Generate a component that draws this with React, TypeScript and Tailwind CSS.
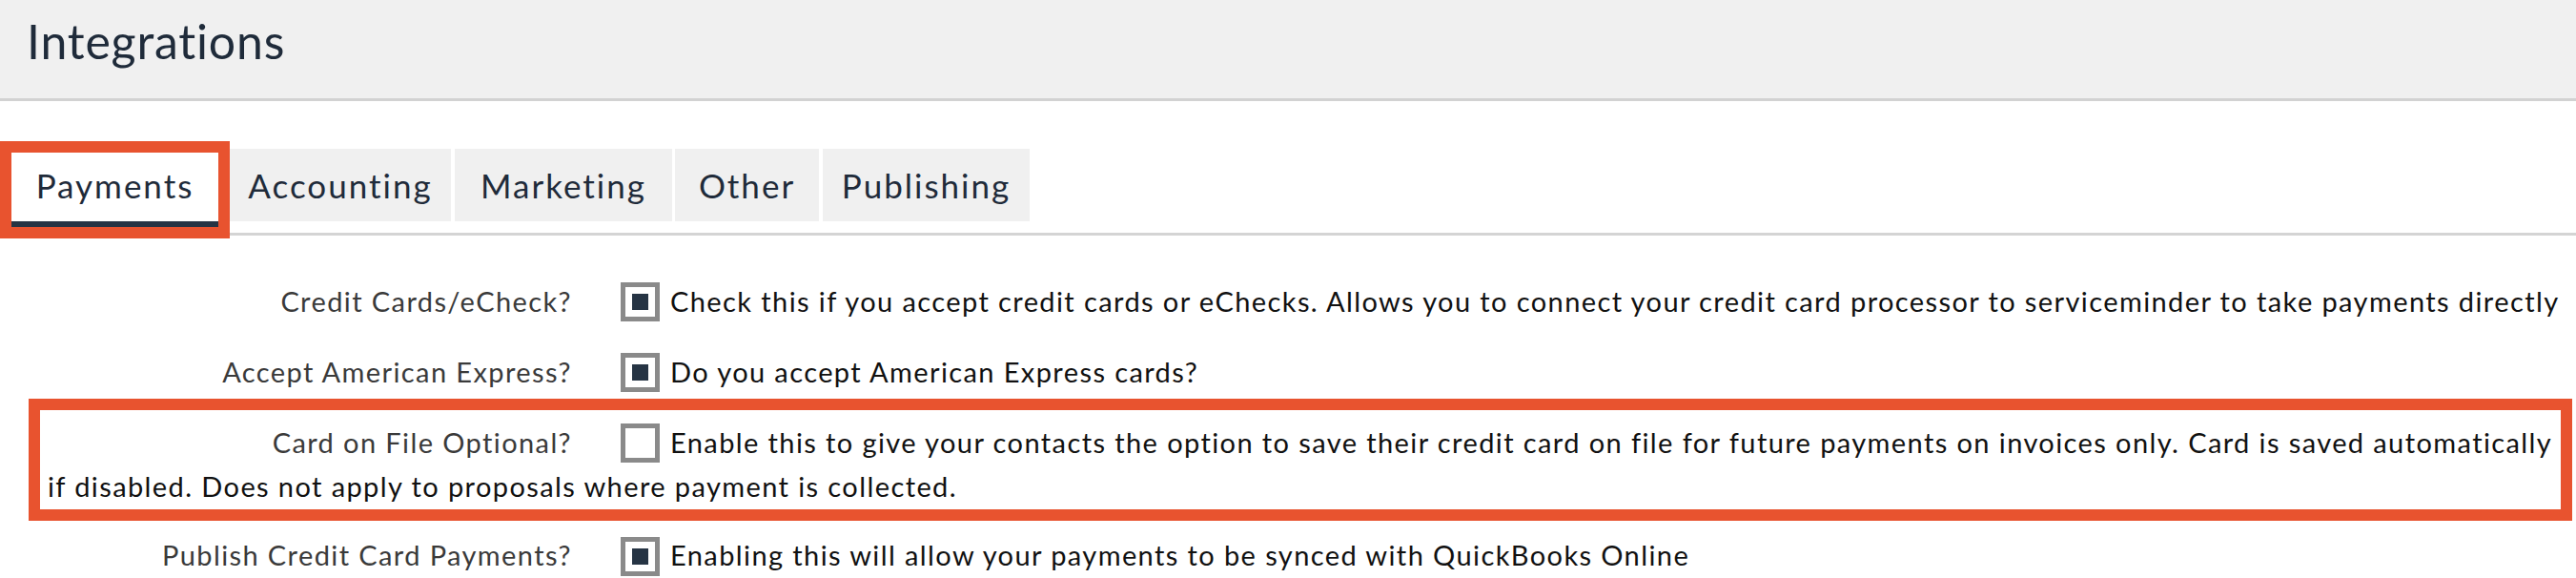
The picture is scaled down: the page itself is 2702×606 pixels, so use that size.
import React from "react";

const FONT = { fontFamily: "Lato, 'Liberation Sans', sans-serif" };

function Box({ checked }: { checked: boolean }) {
  return (
    <span className="relative top-[-3px] ml-[51px] mr-[11px] inline-flex h-[41px] w-[41px] items-center justify-center border-[5px] border-[#8a8a8a] bg-white align-middle">
      {checked && <span className="block h-[17px] w-[17px] bg-[#263444]" />}
    </span>
  );
}

function Row({
  label,
  checked,
  children,
  highlight,
}: {
  label: string;
  checked: boolean;
  children: React.ReactNode;
  highlight?: boolean;
}) {
  return (
    <div className="relative py-[14px] pl-[50px] pr-[8px] text-[29px] leading-[44px] tracking-[1.4px] text-[#111]">
      <span className="inline-block w-[550px] text-right text-[#3a3a3a]">{label}</span>
      <Box checked={checked} />
      <span>{children}</span>
      {highlight && (
        <div className="pointer-events-none absolute left-[30px] right-[4px] top-[-10px] bottom-0 border-[12px] border-[#e8532f]" />
      )}
    </div>
  );
}

export default function App() {
  const tabs = [
    { name: "Accounting", w: "w-[232px]", mr: "mr-[4px]" },
    { name: "Marketing", w: "w-[228px]", mr: "mr-[3px]" },
    { name: "Other", w: "w-[151px]", mr: "mr-[4px]" },
    { name: "Publishing", w: "w-[217px]", mr: "mr-0" },
  ];
  return (
    <div className="min-h-[606px] w-[2702px] bg-white" style={FONT}>
      <div className="h-[106px] border-b-[3px] border-[#d2d2d2] bg-[#f0f0f0] pl-[28px] pt-[13px]">
        <h1 className="text-[50px] leading-[60px] font-normal tracking-[0.8px] text-[#1f2b3a]">Integrations</h1>
      </div>

      <div className="mt-[50px] flex items-start pl-[12px] text-[35px] tracking-[2px] text-[#1f2b3a]">
        <div className="relative mr-[12px] flex h-[82px] w-[217px] items-start justify-center border-b-[6px] border-[#263444] bg-white">
          <span className="flex h-[76px] items-center">Payments</span>
          <div className="pointer-events-none absolute left-[-12px] right-[-12px] top-[-8px] bottom-[-18px] border-[12px] border-[#e8532f]" />
        </div>
        {tabs.map((t) => (
          <div
            key={t.name}
            className={`flex h-[76px] items-center justify-center bg-[#f0f0f0] ${t.w} ${t.mr}`}
          >
            {t.name}
          </div>
        ))}
      </div>
      <div className="mt-[6px] h-[3px] bg-[#d4d4d4]" />

      <div className="mt-[33px]">
        <Row label="Credit Cards/eCheck?" checked>
          Check this if you accept credit cards or eChecks. Allows you to connect your credit card processor to serviceminder to take payments directly
        </Row>
        <Row label="Accept American Express?" checked>
          Do you accept American Express cards?
        </Row>
        <Row label="Card on File Optional?" checked={false} highlight>
          Enable this to give your contacts the option to save their credit card on file for future payments on invoices only. Card is saved automatically
          <br />
          if disabled. Does not apply to proposals where payment is collected.
        </Row>
        <Row label="Publish Credit Card Payments?" checked>
          Enabling this will allow your payments to be synced with QuickBooks Online
        </Row>
      </div>
    </div>
  );
}
